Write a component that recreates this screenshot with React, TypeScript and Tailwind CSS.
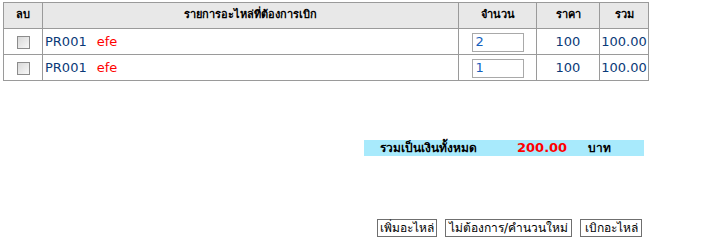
import * as React from 'react';

const items = [
    { id: 1, code: 'PR001', name: 'efe', qty: '2', price: '100', total: '100.00' },
    { id: 2, code: 'PR001', name: 'efe', qty: '1', price: '100', total: '100.00' },
];

const font = 'font-["DejaVu_Sans","Noto_Sans",Tahoma,sans-serif]';

export default function App() {
    return (
        <div className={`w-[713px] h-[244px] bg-white pl-[3px] pt-[2px] ${font}`}>
            <table className="w-[645px] border-collapse border border-[#9a9a9a] table-fixed">
                <colgroup>
                    <col className="w-[39px]" />
                    <col className="w-[416px]" />
                    <col className="w-[78px]" />
                    <col className="w-[63px]" />
                    <col className="w-[49px]" />
                </colgroup>
                <thead>
                    <tr className="h-[26px] bg-[#e8e8e8] text-[11px] font-bold text-black">
                        <th className="border border-[#9a9a9a] p-0 text-center">ลบ</th>
                        <th className="border border-[#9a9a9a] p-0 text-center">รายการอะไหล่ที่ต้องการเบิก</th>
                        <th className="border border-[#9a9a9a] p-0 text-center">จำนวน</th>
                        <th className="border border-[#9a9a9a] p-0 text-center">ราคา</th>
                        <th className="border border-[#9a9a9a] p-0 text-center">รวม</th>
                    </tr>
                </thead>
                <tbody>
                    {items.map(item => (
                        <tr key={item.id} className="h-[26px] text-[13px] text-[#0a3a78]">
                            <td className="border border-[#9a9a9a] p-0 text-center">
                                <input
                                    type="checkbox"
                                    className="w-[13px] h-[13px] appearance-none border border-[#8c8c8c] bg-gradient-to-br from-[#d8d8d8] to-[#f8f8f8] align-middle"
                                />
                            </td>
                            <td className="border border-[#9a9a9a] p-0 pl-[2px]">
                                {item.code}
                                <span className="ml-[10px] text-[#ff0000]">{item.name}</span>
                            </td>
                            <td className="border border-[#9a9a9a] p-0 text-center">
                                <input
                                    type="text"
                                    defaultValue={item.qty}
                                    className="w-[52px] h-[19px] border border-[#a9a9a9] px-[3px] text-[13px] text-[#1560bd] align-middle outline-none"
                                />
                            </td>
                            <td className="border border-[#9a9a9a] p-0 text-center">{item.price}</td>
                            <td className="border border-[#9a9a9a] p-0 text-center">{item.total}</td>
                        </tr>
                    ))}
                </tbody>
            </table>

            <div className="mt-[59px] flex w-[645px] justify-end pr-[4px]">
                <div className="flex h-[16px] w-[280px] items-center bg-[#a8eafc] pl-[16px] text-[12px] font-bold text-black whitespace-nowrap">
                    <span className="w-[137px]">รวมเป็นเงินทั้งหมด</span>
                    <span className="w-[71px] text-[13px] text-[#ff0000]">200.00</span>
                    <span>บาท</span>
                </div>
            </div>

            <div className="mt-[63px] flex w-[645px] justify-end gap-[8px] pr-[6px]">
                <button className="h-[18px] w-[60px] overflow-visible whitespace-nowrap border border-[#6f6f6f] bg-white p-0 text-[12px] leading-none text-black">เพิ่มอะไหล่</button>
                <button className="h-[18px] w-[127px] overflow-visible whitespace-nowrap border border-[#6f6f6f] bg-white p-0 text-[12px] leading-none text-black">ไม่ต้องการ/คำนวนใหม่</button>
                <button className="h-[18px] w-[62px] overflow-visible whitespace-nowrap border border-[#6f6f6f] bg-white p-0 text-[12px] leading-none text-black">เบิกอะไหล่</button>
            </div>
        </div>
    );
}
